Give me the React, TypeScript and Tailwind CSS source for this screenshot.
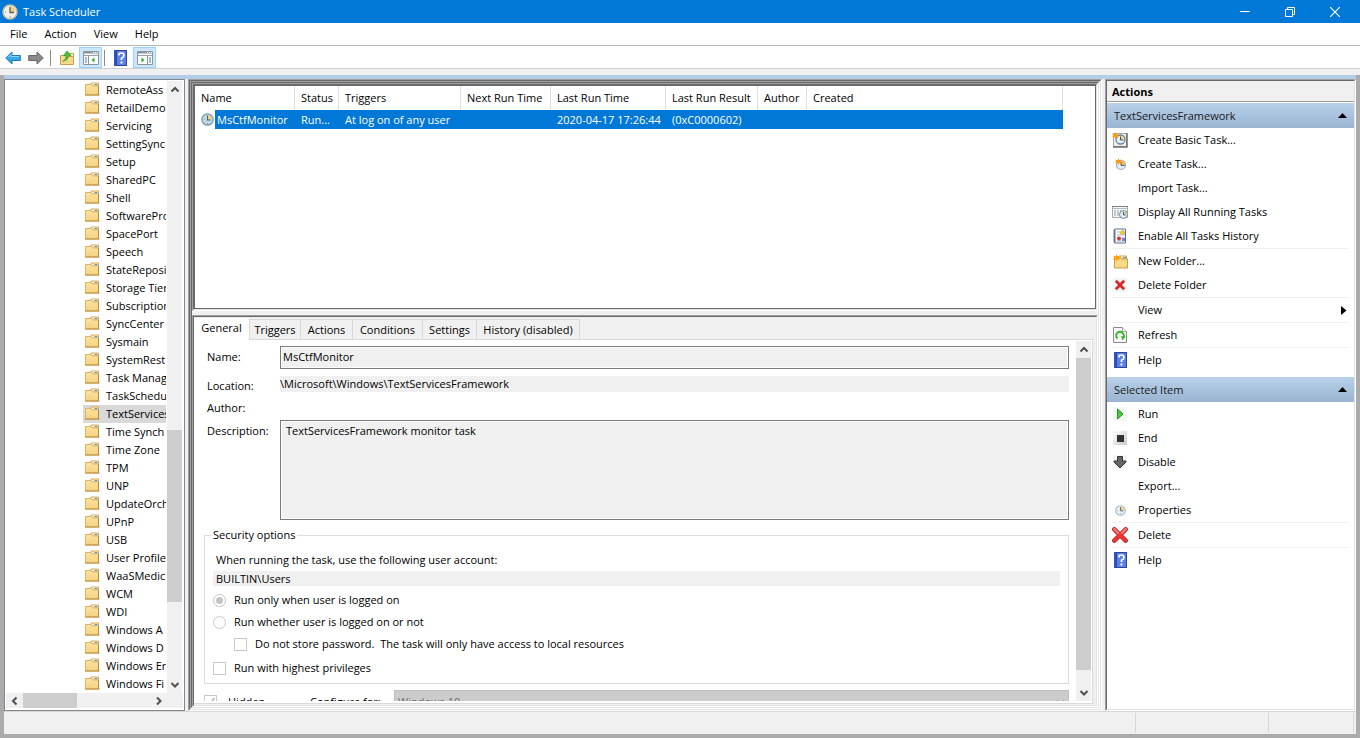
import React from "react";

const treeItems = [
  "RemoteAss", "RetailDemo", "Servicing", "SettingSync", "Setup", "SharedPC", "Shell",
  "SoftwarePro", "SpacePort", "Speech", "StateReposi", "Storage Tier",
  "Subscription", "SyncCenter", "Sysmain", "SystemRest", "Task Manag", "TaskSchedu",
  "TextServices", "Time Synch", "Time Zone", "TPM", "UNP", "UpdateOrch",
  "UPnP", "USB", "User Profile", "WaaSMedic", "WCM", "WDI", "Windows A",
  "Windows D", "Windows Er", "Windows Fi",
];

function FolderIcon({ className = "" }: { className?: string }) {
  return (
    <svg width="15" height="14" viewBox="0 0 15 14" className={className} aria-hidden="true">
      <defs>
        <linearGradient id="folderFill" x1="0" y1="0" x2="0" y2="1">
          <stop offset="0" stopColor="#fbe3a0" />
          <stop offset="1" stopColor="#f5d27c" />
        </linearGradient>
      </defs>
      <path d="M6 3V1h7.5v3H6z" fill="#fff3cf" stroke="#dba850" />
      <path d="M9.500 2.500h3" stroke="#4a9be0" />
      <path d="M.5 2.500h6l1 1.500h6v9H.5z" fill="url(#folderFill)" stroke="#dcb468" />
      <path d="M0 13h14.500" stroke="#b88c3e" />
      <path d="M13.500 4v9" stroke="#b88c3e" />
    </svg>
  );
}

function Clock({ size = 16, face = "#bcd8e8", rim = "#7d98ab" }: { size?: number; face?: string; rim?: string }) {
  return (
    <svg width={size} height={size} viewBox="0 0 16 16" aria-hidden="true">
      <circle cx="8" cy="8" r="7" fill={face} stroke={rim} strokeWidth="1.500" />
      <path d="M8 8V2.500A5.500 5.500 0 0 1 13.500 8z" fill="#f0cf80" />
      <path d="M8 3v5.500h4" fill="none" stroke="#4d6475" strokeWidth="1.300" />
      <path d="M3 8h1M8 12v1.500" stroke="#7b93a5" />
    </svg>
  );
}

const starPath = "M4 0l1 2.500L8 1.500 6.500 4 8 6.500 5 6 4 8.500 3 6 0 6.500 1.500 4 0 2 3 2.500z";

function HelpIcon() {
  return (
    <svg width="13" height="16" viewBox="0 0 13 16" aria-hidden="true">
      <rect width="13" height="16" fill="#2c4596" />
      <rect x="3" y="1" width="9" height="14" fill="#5d80e6" />
      <rect x="0" y="0" width="2" height="16" fill="#2f55c0" />
      <path d="M5 5.500V4.500Q5 3 7.500 3T10 5.500Q10 7 7.500 8.200V10" fill="none" stroke="#fff" strokeWidth="1.700" />
      <rect x="6.500" y="11.500" width="2" height="2" fill="#fff" />
    </svg>
  );
}

function Icon({ name }: { name: string }) {
  switch (name) {
    case "basic":
      return (
        <svg width="16" height="16" viewBox="0 0 16 16" aria-hidden="true">
          <path d="M1.500 1.500h13v13h-13z" fill="#efefed" stroke="#a9a49e" />
          <path d="M1 15h14V1" fill="none" stroke="#716b66" strokeWidth="1.500" />
          <circle cx="8.500" cy="7.500" r="4.500" fill="#e3f0f6" stroke="#66889a" strokeWidth="1.300" />
          <path d="M8.500 7.500V4A3.500 3.500 0 0 1 12 7.500z" fill="#f3d386" />
          <path d="M8.500 4.500V8h3" fill="none" stroke="#365062" />
          <path d={starPath} fill="#ff9d0a" transform="scale(.85)" />
        </svg>
      );
    case "create":
      return (
        <svg width="16" height="16" viewBox="0 0 16 16" aria-hidden="true">
          <circle cx="9" cy="9" r="4.500" fill="#e3eef4" stroke="#9aabb9" strokeWidth="1.200" />
          <path d="M9 9V5A4.500 4.500 0 0 1 13.500 9z" fill="#f5b64c" />
          <path d="M9 6v3.500h3.500" fill="none" stroke="#4e6373" />
          <path d={starPath} fill="#fb960e" transform="translate(3 2) scale(.85)" />
        </svg>
      );
    case "display":
      return (
        <svg width="16" height="16" viewBox="0 0 16 16" aria-hidden="true">
          <path d="M.5 2.500h15v11H.5z" fill="#f8f8f8" stroke="#a4abb0" />
          <path d="M0 2.500h16" stroke="#73838f" />
          <path d="M1 4.500h14" stroke="#b4bcc2" />
          <path d="M2 7h2m1 0h2m1 0h2M2 9h2m1 0h2M2 11h2m1 0h2" stroke="#8e999f" />
          <circle cx="11.500" cy="10.500" r="4" fill="#dcecf3" stroke="#708896" />
          <path d="M11.500 10.500v-3a3 3 0 0 1 3 3z" fill="#eecb7c" />
          <path d="M11.500 8v3h2" fill="none" stroke="#3e5565" />
        </svg>
      );
    case "history":
      return (
        <svg width="16" height="16" viewBox="0 0 16 16" aria-hidden="true">
          <path d="M2.500 1h11v14h-11z" fill="#fff" stroke="#5c7195" />
          <path d="M1 3h3M1 5h3M1 7h3M1 9h3M1 11h3M1 13h3" stroke="#777" />
          <path d="M5 4h8M5 7h8M5 10h8M5 13h8" stroke="#9db3d8" />
          <path d="M10.500 1.500l2.500 4.500H8z" fill="#f8d117" stroke="#d3a514" strokeWidth=".5" />
          <circle cx="7" cy="10.500" r="2" fill="#d83434" />
          <path d="M10 10h3v3h-3z" fill="#6c8cbe" />
        </svg>
      );
    case "newfolder":
      return (
        <svg width="16" height="16" viewBox="0 0 16 16" aria-hidden="true">
          <path d="M8 5V3h6.500v3H8z" fill="#fff3cf" stroke="#cfa04a" />
          <path d="M11 4.500h3" stroke="#4a9be0" />
          <path d="M2.500 4.500h6l1 1.500h6v9h-13z" fill="#f8d98a" stroke="#c99d49" />
          <path d={starPath} fill="#ff9d0a" transform="translate(1 1) scale(.9)" />
        </svg>
      );
    case "x":
      return (
        <svg width="14" height="14" viewBox="0 0 15 15" aria-hidden="true">
          <rect width="15" height="15" fill="#f5f5f5" />
          <path d="M3 3l9 9M12 3l-9 9" stroke="#d8282a" strokeWidth="3" />
        </svg>
      );
    case "bigx":
      return (
        <svg width="16" height="16" viewBox="0 0 17 17" aria-hidden="true">
          <path d="M2.500 2.500l12 12M14.500 2.500l-12 12" stroke="#b32222" strokeWidth="4.800" strokeLinecap="round" />
          <path d="M2.500 2.500l12 12M14.500 2.500l-12 12" stroke="#ee3434" strokeWidth="3.600" strokeLinecap="round" />
          <path d="M2.500 2.200l4 4M14.500 2.200l-4 4" stroke="#ee7a7a" strokeWidth="2.400" strokeLinecap="round" />
        </svg>
      );
    case "refresh":
      return (
        <svg width="14" height="16" viewBox="0 0 14 16" aria-hidden="true">
          <path d="M.5.5h9l4 4v11H.5z" fill="#f7f7f7" stroke="#8b8b8b" />
          <path d="M9.500.5v4h4" fill="#fff" stroke="#a9a9a9" />
          <path d="M4.500 11.500A3.800 3.800 0 1 1 10 11" fill="none" stroke="#37b52c" strokeWidth="2" />
          <path d="M8 9l4.500.5L9.500 13.500z" fill="#37b52c" />
        </svg>
      );
    case "help":
      return <HelpIcon />;
    case "run":
      return (
        <svg width="14" height="14" viewBox="0 0 14 14" aria-hidden="true">
          <rect width="14" height="14" fill="#f5f5f5" />
          <path d="M4.500 2v10l5.500-5z" fill="#45cb3b" stroke="#219b1c" />
        </svg>
      );
    case "end":
      return (
        <svg width="14" height="14" viewBox="0 0 14 14" aria-hidden="true">
          <defs>
            <linearGradient id="endFill" x1="0" y1="0" x2="1" y2="1">
              <stop offset=".2" stopColor="#f5f5f5" />
              <stop offset="1" stopColor="#c9c9c9" />
            </linearGradient>
          </defs>
          <rect width="14" height="14" fill="url(#endFill)" />
          <rect x="4" y="4" width="7" height="7" fill="#333" />
        </svg>
      );
    case "disable":
      return (
        <svg width="14" height="14" viewBox="0 0 14 14" aria-hidden="true">
          <rect width="14" height="14" fill="#f5f5f5" />
          <path d="M4.500 1.500h5V6h3.500v1L7 13 1 7V6h3.500z" fill="#666" stroke="#363636" />
        </svg>
      );
    case "properties":
      return (
        <span className="mt-px ml-px">
          <Clock size={11} face="#e5eff5" rim="#a6bac8" />
        </span>
      );
    default:
      return null;
  }
}

function Frame({ children, className = "", inner = "" }: { children: React.ReactNode; className?: string; inner?: string }) {
  return (
    <div className={`flex min-h-0 min-w-0 border border-t-[#a0a0a0] border-r-white border-b-white border-l-[#a0a0a0] ${className}`}>
      <div className={`flex min-h-0 min-w-0 flex-1 flex-col border border-t-[#696969] border-r-[#e3e3e3] border-b-[#e3e3e3] border-l-[#696969] ${inner}`}>
        {children}
      </div>
    </div>
  );
}

const chevrons = {
  up: "M1.500 6.500L5 3l3.500 3.500",
  down: "M1.500 3L5 6.500 8.500 3",
  left: "M6.500 1.500L3 5l3.500 3.500",
  right: "M3 1.500L6.500 5 3 8.500",
};

function ScrollArrow({ dir, label }: { dir: keyof typeof chevrons; label: string }) {
  const shape = dir === "up" || dir === "down" ? "h-[17px] w-[15px]" : "h-[15px] w-[17px]";
  return (
    <button aria-label={label} className={`flex shrink-0 items-center justify-center ${shape}`}>
      <svg width="10" height="10" viewBox="0 0 10 10" aria-hidden="true">
        <path d={chevrons[dir]} fill="none" stroke="#505050" strokeWidth="2" />
      </svg>
    </button>
  );
}

function WindowIcon({ flip = false }: { flip?: boolean }) {
  return (
    <svg width="16" height="14" viewBox="0 0 16 14" aria-hidden="true">
      <path d="M.5.5h15v13H.5z" fill="#fbfbfb" stroke="#8d949a" />
      <path d="M1 1.500h14" stroke="#8d949a" strokeWidth="2" />
      <path d="M10 1.500h1m1 0h1m1 0h1" stroke="#fff" />
      <path d="M1 4.500h14" stroke="#9aa0a6" />
      {flip ? (
        <>
          <path d="M10.500 5v8" stroke="#8d949a" />
          <path d="M12 7h2M12 9h2M12 11h2" stroke="#4b7fc0" />
          <path d="M4.500 6.500v5l3-2.500z" fill="#38ad2d" />
        </>
      ) : (
        <>
          <path d="M5.500 5v8" stroke="#8d949a" />
          <path d="M2 7h2M2 9h2M2 11h2" stroke="#4b7fc0" />
          <path d="M11.500 6.500v5l-3-2.500z" fill="#38ad2d" />
        </>
      )}
    </svg>
  );
}

function ToolArrow({ forward = false }: { forward?: boolean }) {
  return (
    <svg width="16" height="14" viewBox="0 0 16 14" aria-hidden="true">
      {forward ? (
        <path d="M15.300 7L9 1v3.500H.7v5H9V13z" fill="#8a8a8a" stroke="#666" />
      ) : (
        <>
          <path d="M.7 7L7 1v3.500h8.300v5H7V13z" fill="#35a8e8" stroke="#2378b4" />
          <path d="M3 6.500L6 3.500v2h8" fill="none" stroke="#8ed4fa" />
        </>
      )}
    </svg>
  );
}

const columns = [
  { name: "Name", cls: "w-[100px]" },
  { name: "Status", cls: "w-[44px]" },
  { name: "Triggers", cls: "w-[122px]" },
  { name: "Next Run Time", cls: "w-[90px]" },
  { name: "Last Run Time", cls: "w-[115px]" },
  { name: "Last Run Result", cls: "w-[92px]" },
  { name: "Author", cls: "w-[49px]" },
  { name: "Created", cls: "w-[256px]" },
];
const rowCells = ["Run...", "At log on of any user", "", "2020-04-17 17:26:44", "(0xC0000602)", "", ""];

const tabs = [
  { name: "Triggers", cls: "w-[52px] border-l" },
  { name: "Actions", cls: "w-[52px]" },
  { name: "Conditions", cls: "w-[70px]" },
  { name: "Settings", cls: "w-[54px]" },
  { name: "History (disabled)", cls: "w-[103px]" },
];

const topActions: [string, string][][] = [
  [["basic", "Create Basic Task..."], ["create", "Create Task..."], ["", "Import Task..."], ["display", "Display All Running Tasks"], ["history", "Enable All Tasks History"]],
  [["newfolder", "New Folder..."], ["x", "Delete Folder"]],
  [["", "View"]],
  [["refresh", "Refresh"]],
  [["help", "Help"]],
];
const itemActions: [string, string][][] = [
  [["run", "Run"], ["end", "End"], ["disable", "Disable"], ["", "Export..."], ["properties", "Properties"]],
  [["bigx", "Delete"]],
  [["help", "Help"]],
];

function ActionGroup({ title, groups }: { title: string; groups: [string, string][][] }) {
  return (
    <section>
      <button className="flex h-[25px] w-full items-center justify-between bg-linear-to-b from-[#b9d1ea] to-[#99b4d1] pr-[7px] pl-[7px] text-[#1a1a1a]">
        {title}
        <svg width="9" height="5" viewBox="0 0 9 5" aria-hidden="true"><path d="M0 5h9L4.500 0z" fill="#000" /></svg>
      </button>
      {groups.map((group, i) => (
        <div key={i} className={i > 0 ? "mx-[5px] border-t border-[#efefef]" : "mx-[5px]"}>
          {group.map(([icon, label]) => (
            <button key={label} className="flex h-6 w-full items-center pr-[2px] text-left">
              <span className="flex w-4 shrink-0 justify-center"><Icon name={icon} /></span>
              <span className="ml-[10px] flex-1">{label}</span>
              {label === "View" && (
                <svg width="6" height="9" viewBox="0 0 6 9" aria-hidden="true"><path d="M0 0v9l5.500-4.500z" fill="#000" /></svg>
              )}
            </button>
          ))}
        </div>
      ))}
    </section>
  );
}

const box = "size-[13px] shrink-0 appearance-none border border-[#c8c8c8] bg-white";

export default function App() {
  return (
    <div className="flex h-screen flex-col overflow-hidden bg-[#f0f0f0] font-['Open_Sans','Noto_Sans',sans-serif] text-[11px] leading-4 text-black">
      <header className="flex h-[23px] shrink-0 items-center bg-[#0078d7] pl-[2px] text-white">
        <Clock size={16} face="#f3efe3" rim="#c2bda9" />
        <h1 className="ml-[5px] flex-1">Task Scheduler</h1>
        <button aria-label="Minimize" className="flex h-full w-[45px] items-center justify-center">
          <svg width="10" height="10" viewBox="0 0 10 10" aria-hidden="true"><path d="M0 4.500h10" stroke="#fff" /></svg>
        </button>
        <button aria-label="Restore" className="flex h-full w-[45px] items-center justify-center">
          <svg width="10" height="10" viewBox="0 0 10 10" aria-hidden="true"><path d="M.5 2.500h7v7h-7zM2.500 2V.5h7v7H8" fill="none" stroke="#fff" /></svg>
        </button>
        <button aria-label="Close" className="mr-[2px] flex h-full w-[46px] items-center justify-center">
          <svg width="10" height="10" viewBox="0 0 10 10" aria-hidden="true"><path d="M0 0l10 10M10 0L0 10" stroke="#fff" strokeWidth="1.200" /></svg>
        </button>
      </header>

      <nav className="flex h-[23px] shrink-0 items-center gap-[17px] border-b border-[#b5b5b5] bg-white pl-[10px]">
        <button>File</button>
        <button>Action</button>
        <button>View</button>
        <button>Help</button>
      </nav>

      <div className="flex h-[23px] shrink-0 items-center border-b border-[#d0d0d0] bg-white pt-px pl-[5px]">
        <button aria-label="Back"><ToolArrow /></button>
        <button aria-label="Forward" className="ml-[7px]"><ToolArrow forward /></button>
        <span className="ml-[6px] h-4 w-px bg-[#8a8a8a]" />
        <button aria-label="Up one level" className="ml-2">
          <svg width="16" height="16" viewBox="0 0 16 16" aria-hidden="true">
            <path d="M8 5V3.500h6.500V6" fill="#fff3cf" stroke="#cfa04a" />
            <path d="M1.500 5.500h6l1 1h6v8h-13z" fill="#f8d98a" stroke="#c99d49" />
            <path d="M4 11.500Q7.500 9 7 5.500H4.500L8 1l4 4.500H9.500Q9.500 10 4 11.500z" fill="#4cc23a" stroke="#2f9a24" strokeWidth=".7" />
          </svg>
        </button>
        <button aria-label="Show or hide console tree" className="ml-[4px] flex h-[21px] w-[23px] items-center justify-center border border-[#99d1ff] bg-[#cce8ff]"><WindowIcon /></button>
        <span className="ml-[2px] h-4 w-px bg-[#8a8a8a]" />
        <button aria-label="Help topics" className="ml-[9px]"><HelpIcon /></button>
        <button aria-label="Show or hide action pane" className="ml-[6px] flex h-[21px] w-[23px] items-center justify-center border border-[#99d1ff] bg-[#cce8ff]"><WindowIcon flip /></button>
      </div>
      <div className="h-[6px] shrink-0" />

      <div className="flex min-h-0 flex-1 flex-col border-x-4 border-b-4 border-[#ababab]">
        <div className="h-1 shrink-0 bg-[#b4cde6]" />
        <main className="flex min-h-0 flex-1 gap-[3px]">
          <aside className="flex w-[181px] shrink-0 flex-col border border-[#828790] bg-white p-px">
            <div className="flex min-h-0 flex-1">
              <ul className="min-w-0 flex-1 overflow-hidden">
                {treeItems.map((item) => (
                  <li key={item} className="pl-[77px]">
                    <button className={`flex h-[18px] w-full items-center overflow-hidden pl-[2px] whitespace-nowrap ${item === "TextServices" ? "bg-[#d9d9d9]" : ""}`}>
                      <FolderIcon className="mb-[2px] shrink-0" />
                      <span className="ml-[6px]">{item}</span>
                    </button>
                  </li>
                ))}
              </ul>
              <div className="mx-px flex w-[15px] shrink-0 flex-col bg-[#f0f0f0]">
                <ScrollArrow dir="up" label="Scroll tree up" />
                <div className="flex-[332]" />
                <div className="flex-[172] bg-[#cdcdcd]" />
                <div className="flex-[74]" />
                <ScrollArrow dir="down" label="Scroll tree down" />
              </div>
            </div>
            <div className="mb-px flex h-[15px] shrink-0 bg-[#f0f0f0] pr-4">
              <ScrollArrow dir="left" label="Scroll tree left" />
              <div className="w-[54px] bg-[#cdcdcd]" />
              <div className="flex-1" />
              <ScrollArrow dir="right" label="Scroll tree right" />
            </div>
          </aside>

          <Frame className="flex-1">
            <Frame className="flex-1">
              <Frame className="h-[228px] shrink-0">
                <div className="min-h-0 flex-1 overflow-hidden border border-[#696969] bg-white">
                  <table className="w-[868px] table-fixed border-separate border-spacing-0">
                    <thead>
                      <tr>
                        {columns.map((c) => (
                          <th key={c.name} className={`${c.cls} h-6 overflow-hidden border-r border-[#e0e0e0] p-0 pl-[6px] text-left font-normal whitespace-nowrap`}>{c.name}</th>
                        ))}
                      </tr>
                    </thead>
                    <tbody>
                      <tr className="text-white">
                        <td className="h-[19px] p-0">
                          <div className="flex pl-[6px]">
                            <span className="flex w-[14px] items-center"><Clock size={13} /></span>
                            <span className="h-[19px] flex-1 bg-[#0078d7] pl-[2px] leading-[19px]">MsCtfMonitor</span>
                          </div>
                        </td>
                        {rowCells.map((c, i) => (
                          <td key={i} className="h-[19px] bg-[#0078d7] p-0 pl-[6px] whitespace-nowrap">{c}</td>
                        ))}
                      </tr>
                    </tbody>
                  </table>
                </div>
              </Frame>

              <div className="h-1 shrink-0 bg-[#f0f0f0]" />

              <Frame className="flex-1" inner="bg-[#f0f0f0] pt-px pr-[3px] pb-px">
                <div role="tablist" className="relative z-10 -mb-px flex h-[22px] shrink-0 items-end">
                  <button role="tab" aria-selected="true" className="h-[22px] w-[55px] shrink-0 bg-white pb-[2px]">General</button>
                  {tabs.map((t) => (
                    <button key={t.name} role="tab" aria-selected="false" className={`${t.cls} h-[21px] shrink-0 border-y border-r border-[#d9d9d9] whitespace-nowrap`}>{t.name}</button>
                  ))}
                </div>
                <div className="flex min-h-0 flex-1 border border-l-0 border-[#d9d9d9] bg-white pr-px pb-[2px] pl-px">
                  <div className="min-w-0 flex-1 overflow-hidden pr-[7px] pl-[9px]">
                    <div className="grid grid-cols-[73px_1fr] pt-[6px] pl-[3px]">
                      <label htmlFor="name" className="pt-[3px]">Name:</label>
                      <input id="name" readOnly defaultValue="MsCtfMonitor" className="h-[23px] w-full border border-[#7a7a7a] bg-[#f0f0f0] px-[2px] pb-[2px] shadow-[inset_0_0_0_1px_#fff] outline-none" />
                      <label htmlFor="location" className="pt-[9px]">Location:</label>
                      <input id="location" readOnly defaultValue="\Microsoft\Windows\TextServicesFramework" className="mt-[7px] h-4 w-full bg-[#f0f0f0] outline-none" />
                      <span className="mt-[6px] mb-1">Author:</span>
                      <span />
                      <label htmlFor="description" className="pt-[3px]">Description:</label>
                      <textarea id="description" readOnly defaultValue="TextServicesFramework monitor task" className="block h-[100px] w-full resize-none border border-[#7a7a7a] bg-[#f0f0f0] px-[5px] pt-[2px] shadow-[inset_0_0_0_1px_#fff] outline-none" />
                    </div>

                    <fieldset className="mt-[7px] border border-[#dcdcdc] pr-2 pb-[7px] pl-2">
                      <legend className="-ml-[2px] px-[2px]">Security options</legend>
                      <label htmlFor="account" className="block pt-[9px] pl-[3px]">When running the task, use the following user account:</label>
                      <input id="account" readOnly defaultValue="BUILTIN\Users" className="mt-[3px] block h-[15px] w-full bg-[#f0f0f0] pl-[3px] outline-none" />
                      <label className="mt-[6px] flex items-center gap-2">
                        <input type="radio" name="logon" disabled defaultChecked className="size-[13px] appearance-none rounded-full border border-[#c4c4c4] bg-[#c4c4c4] bg-clip-content p-[2px]" />
                        Run only when user is logged on
                      </label>
                      <label className="mt-[6px] flex items-center gap-2">
                        <input type="radio" name="logon" disabled className="size-[13px] appearance-none rounded-full border border-[#c8c8c8] bg-white" />
                        Run whether user is logged on or not
                      </label>
                      <label className="mt-[6px] flex items-center gap-2 pl-[21px] whitespace-pre">
                        <input type="checkbox" disabled className={box} />
                        {"Do not store password.  The task will only have access to local resources"}
                      </label>
                      <label className="mt-2 flex items-center gap-2">
                        <input type="checkbox" disabled className={box} />
                        Run with highest privileges
                      </label>
                    </fieldset>

                    <div className="mt-[6px] flex items-center">
                      <label className="flex w-[106px] shrink-0 items-center gap-[11px]">
                        <span className="grid size-[13px] shrink-0">
                          <input type="checkbox" disabled defaultChecked className={`${box} [grid-area:1/1]`} />
                          <svg width="13" height="13" viewBox="0 0 13 13" className="[grid-area:1/1]" aria-hidden="true"><path d="M3 6.500L5.500 9.500 10.500 3" fill="none" stroke="#b5b5b5" strokeWidth="1.600" /></svg>
                        </span>
                        Hidden
                      </label>
                      <label htmlFor="configure" className="w-[84px] shrink-0">Configure for:</label>
                      <div className="grid flex-1 items-center">
                        <select id="configure" disabled className="h-[23px] w-full appearance-none border border-[#bfbfbf] bg-[#cccccc] pl-[3px] text-[#6d6d6d] opacity-100 [grid-area:1/1]">
                          <option>Windows 10</option>
                        </select>
                        <svg width="9" height="6" viewBox="0 0 9 6" className="mr-1 justify-self-end [grid-area:1/1]" aria-hidden="true"><path d="M1 1l3.500 3.500L8 1" fill="none" stroke="#9a9a9a" /></svg>
                      </div>
                    </div>
                  </div>
                  <div className="mt-px flex w-[15px] shrink-0 flex-col bg-[#f0f0f0]">
                    <ScrollArrow dir="up" label="Scroll details up" />
                    <div className="flex-[312] bg-[#cdcdcd]" />
                    <div className="flex-[14]" />
                    <ScrollArrow dir="down" label="Scroll details down" />
                  </div>
                </div>
              </Frame>
            </Frame>
          </Frame>

          <Frame className="w-[251px] shrink-0" inner="bg-white">
            <h2 className="mb-px h-[21px] shrink-0 border-b border-[#a0a0a0] bg-[#f0f0f0] pl-[5px] leading-[21px] font-bold">Actions</h2>
            <div className="flex min-h-0 flex-1 flex-col gap-[5px] overflow-hidden">
              <ActionGroup title="TextServicesFramework" groups={topActions} />
              <ActionGroup title="Selected Item" groups={itemActions} />
            </div>
          </Frame>
        </main>
        <footer className="flex h-[23px] shrink-0 justify-end border-t border-[#d7d7d7] py-px pr-[2px]">
          <div className="w-[133px] border-l border-[#d7d7d7]" />
          <div className="w-[86px] border-x border-[#d7d7d7]" />
        </footer>
      </div>
    </div>
  );
}
